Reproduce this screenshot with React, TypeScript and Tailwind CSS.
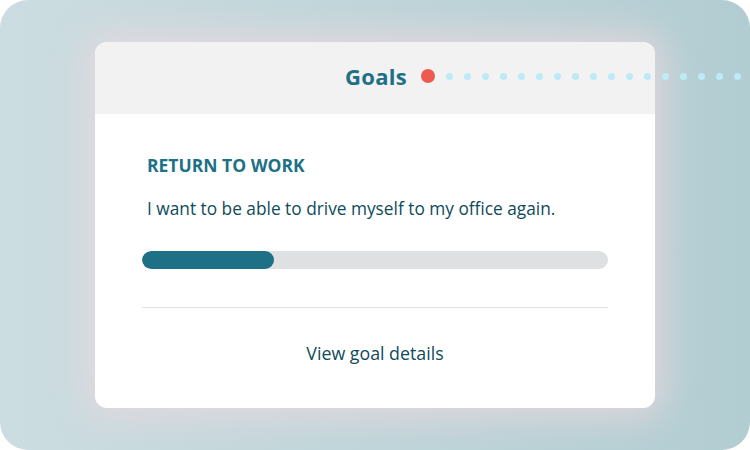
import React from "react";

export default function App() {
  const dots = Array.from({ length: 18 });
  return (
    <div className="w-[750px] h-[450px] bg-white">
      <div
        className="relative w-[750px] h-[450px] rounded-[28px] overflow-hidden bg-gradient-to-r from-[#ccdde1] to-[#b2cdd2] pt-[42px] pl-[95px]"
        style={{ fontFamily: "'Open Sans', 'Noto Sans', sans-serif" }}
      >
        <div className="relative z-10 w-[560px] h-[366px] rounded-[12px] bg-white shadow-[0_0_36px_10px_rgba(232,216,222,0.8)] overflow-hidden flex flex-col">
          <div className="h-[72px] bg-[#f2f2f2] flex items-center justify-end pr-[248px] pb-[4px]">
            <span className="text-[22px] font-bold text-[#1d7085] tracking-[0.3px] leading-none">Goals</span>
          </div>
          <div className="flex-1 px-[47px] pt-[40px] flex flex-col">
            <div className="pl-[5px] text-[17.5px] font-bold text-[#1d7085] leading-[22px]">RETURN TO WORK</div>
            <div className="pl-[5px] mt-[22px] text-[17.3px] text-[#0f4b5b] leading-[22px]">
              I want to be able to drive myself to my office again.
            </div>
            <div className="mt-[31px] h-[18px] rounded-full bg-[#dfe0e2] overflow-hidden">
              <div className="h-full w-[132px] rounded-full bg-[#1d7085]" />
            </div>
            <div className="mt-[38px] h-px bg-[#e0e0e0]" />
            <div className="mt-[34px] text-center text-[17.8px] text-[#0f4b5b] leading-[22px]">View goal details</div>
          </div>
        </div>
        <div className="absolute left-[421px] top-[69px] z-20 flex items-center gap-[11px]">
          <div className="w-[14px] h-[14px] rounded-full bg-[#ef5a4f]" />
          {dots.map((_, i) => (
            <div key={i} className="w-[7px] h-[7px] rounded-full bg-[#bdeaf7]" />
          ))}
        </div>
      </div>
    </div>
  );
}
